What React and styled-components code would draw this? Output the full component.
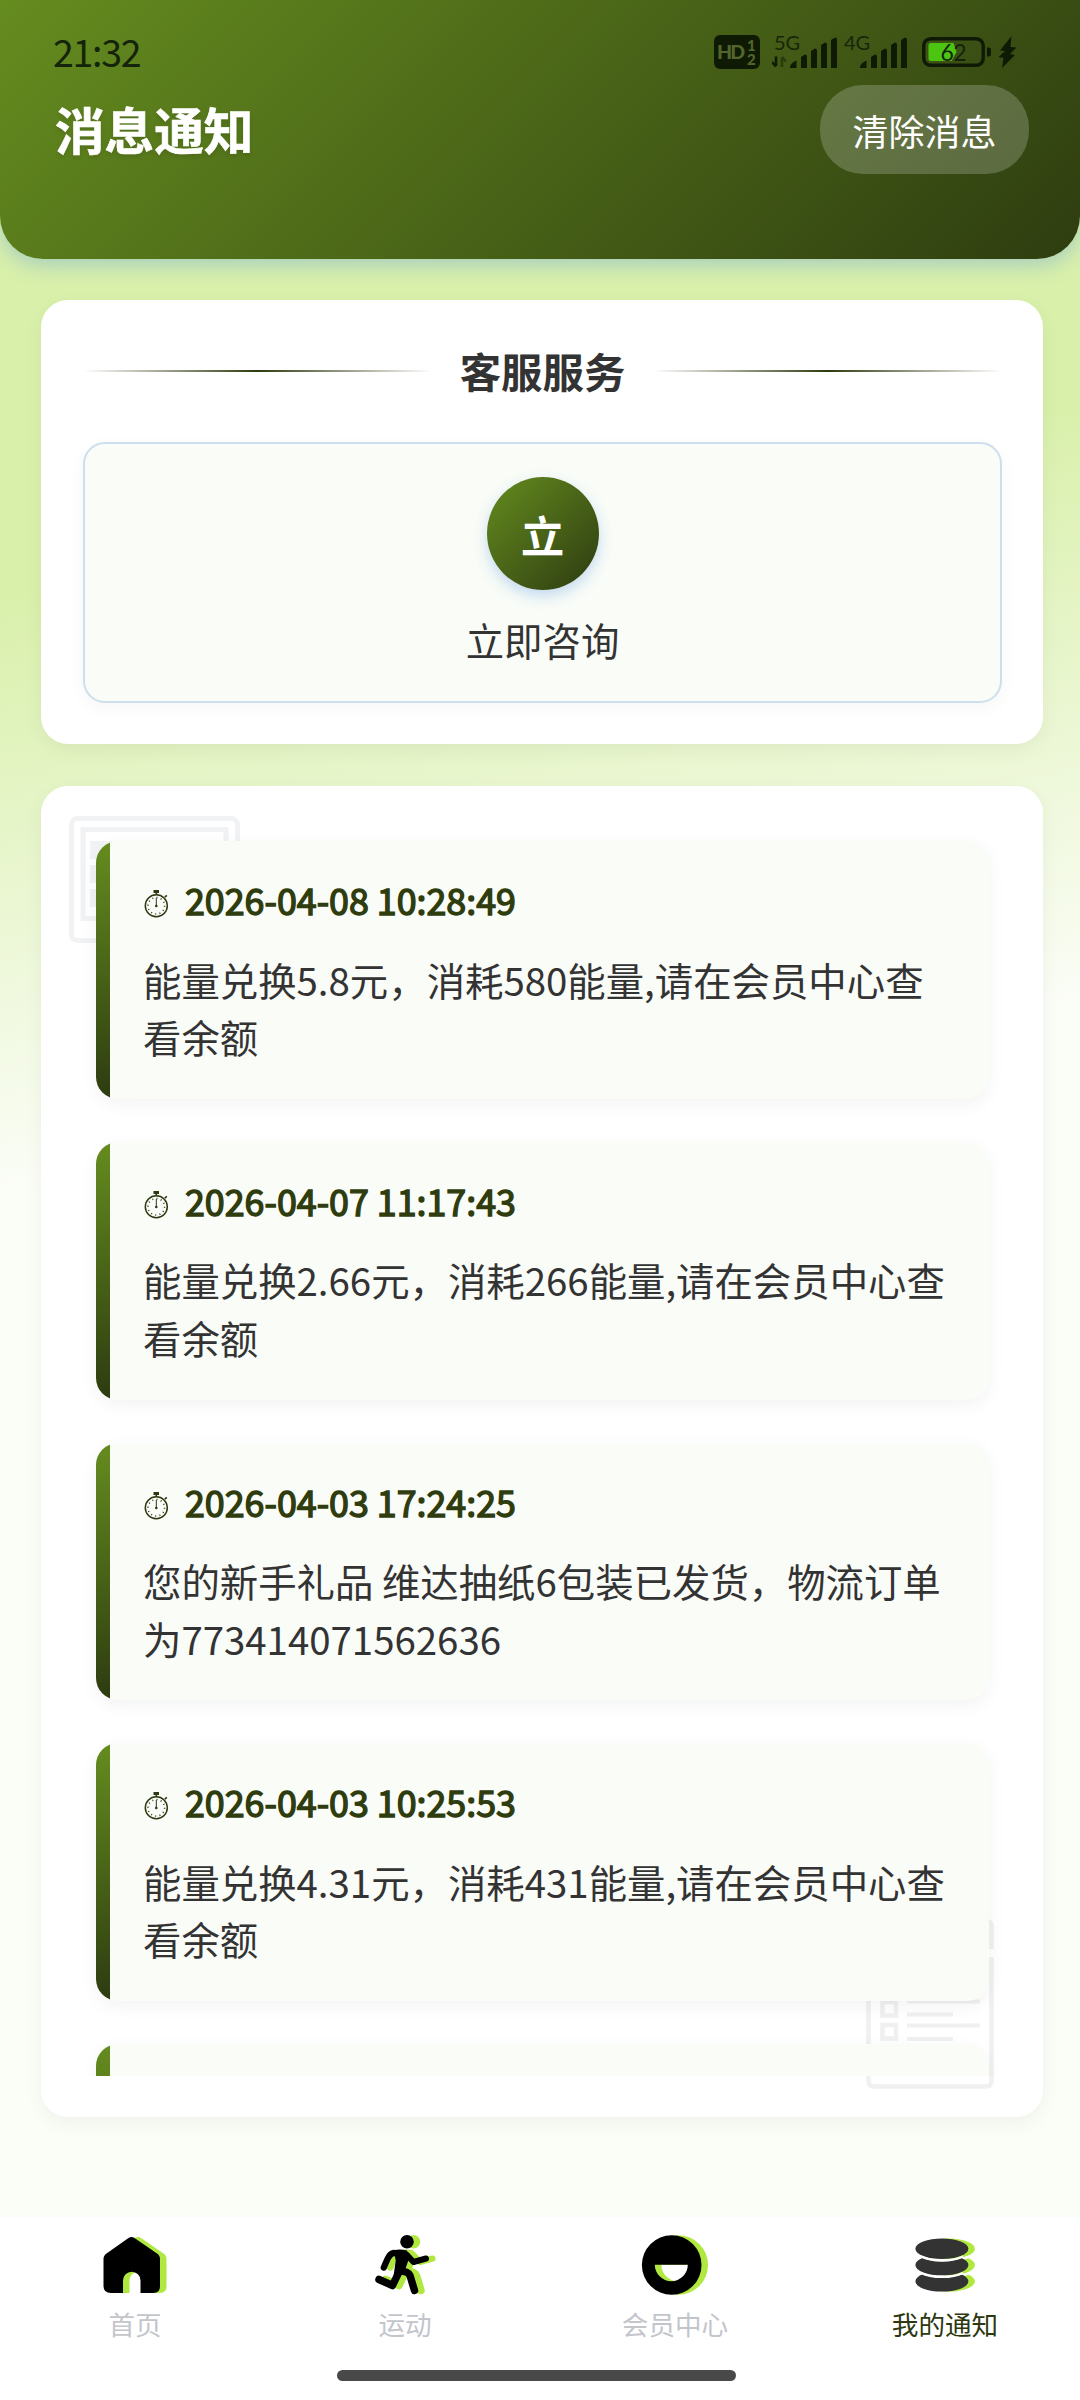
import React from "react";
import styled, { createGlobalStyle, css } from "styled-components";

const messages = [
  {
    id: 1,
    time: "2026-04-08 10:28:49",
    text: "能量兑换5.8元，消耗580能量,请在会员中心查看余额",
  },
  {
    id: 2,
    time: "2026-04-07 11:17:43",
    text: "能量兑换2.66元，消耗266能量,请在会员中心查看余额",
  },
  {
    id: 3,
    time: "2026-04-03 17:24:25",
    text: "您的新手礼品 维达抽纸6包装已发货，物流订单为773414071562636",
  },
  {
    id: 4,
    time: "2026-04-03 10:25:53",
    text: "能量兑换4.31元，消耗431能量,请在会员中心查看余额",
  },
  { id: 5, time: "", text: "" },
];

const StatusIcons = () => (
  <StatusRow>
    <svg width="46" height="34" viewBox="0 0 46 34">
      <rect width="46" height="34" rx="6" fill="#0f1a05" />
      <g fill="#52662c" fontFamily="Lato, sans-serif" fontWeight="900">
        <text x="3" y="24" fontSize="19.5" textLength="28">HD</text>
        <text x="33" y="15.5" fontSize="15">1</text>
        <text x="33" y="29.5" fontSize="15">2</text>
      </g>
    </svg>
    <Signal label="5G" arrows />
    <Signal label="4G" />
    <svg width="70" height="30" viewBox="0 0 70 30">
      <rect x="1.7" y="1.7" width="59.5" height="26.6" rx="7" fill="none" stroke="#0f1a05" strokeWidth="3.4" />
      <path d="M9 6h22.500l3 9-5 9H9a2.500 2.500 0 0 1-2.500-2.500v-13A2.500 2.500 0 0 1 9 6z" fill="#4cc412" />
      <path d="M65 10.500h1.500a2.500 2.500 0 0 1 2.500 2.500v4a2.500 2.500 0 0 1-2.500 2.500H65z" fill="#0f1a05" />
      <text x="18.500" y="23.500" fontSize="23" textLength="26" fill="#14240a" fontFamily="Lato, sans-serif">62</text>
    </svg>
    <svg width="19" height="32" viewBox="0 0 19 32">
      <path d="M13.500 0 2 14.500l5 .5-6.500 6 5 1L4 32 17 19l-5-1 6.500-6.500-6-.5z" fill="#0f1a05" />
    </svg>
  </StatusRow>
);

const Signal = ({ label, arrows }) => (
  <svg width="66" height="50" viewBox="0 -8 66 50">
    <text x="2" y="15" fontSize="20" textLength="26" fill="#17260a" fontFamily="Lato, sans-serif">
      {label}
    </text>
    {arrows && (
      <>
        <path d="M4 21.500v9.500M4 31.500 0 27" stroke="#0f1a05" strokeWidth="2.600" fill="none" />
        <path d="M10 32v-9.500M10 22l4 4.500" stroke="#263c0c" strokeWidth="2.600" fill="none" />
      </>
    )}
    <g fill="#0f1a05">
      <path d="M18 33q0-5 6.500-7.500v7.500z" />
      <path d="M29 22l4-2.500q2 0 2 2V33h-6z" />
      <path d="M39 16l4-2.500q2 0 2 2V33h-6z" />
      <path d="M49 10l4-2.500q2 0 2 2V33h-6z" />
      <path d="M59 5l4-2.500q2 0 2 2V33h-6z" />
    </g>
  </svg>
);

const Stopwatch = () => (
  <svg width="26" height="28" viewBox="0 0 26 28" fill="none" stroke="#2c380f">
    <path d="M9.500 1.500h5.500" strokeWidth="3" />
    <path d="M12.300 2v3M20.800 7.200l2-1.800" strokeWidth="1.600" />
    <circle cx="12.300" cy="15.800" r="11" strokeWidth="1.500" />
    <circle cx="12.300" cy="15.800" r="8.300" strokeWidth="1.500" strokeDasharray="1 3.346" />
    <path d="M12.300 8v8" strokeWidth="1" />
    <circle cx="12.300" cy="16" r="1.300" fill="#2c380f" stroke="none" />
  </svg>
);

// every tab icon is the same shape twice: a lime copy shifted right, then the dark one
const shapes = {
  home: (
    <path
      fillRule="evenodd"
      d="M29.500 9q3-2 6 0L58 24.500q3 2 3 5.500v27.500q0 6.500-6.500 6.500H41.500V51.500a8.500 8.500 0 0 0-17.500 0V64H12q-7.500 0-7.500-7V30q0-3.500 3-5.500z"
    />
  ),
  run: (
    <g fill="none" stroke="currentColor" strokeLinecap="round" strokeLinejoin="round">
      <circle cx="38" cy="12.700" r="6.800" fill="currentColor" stroke="none" />
      <path d="M14.800 38.500 18.500 30Q21 24.500 25 24" strokeWidth="6.300" />
      <path d="M26 22.500q4-1.500 11 0l2 6-4.500 13-8.500 4 2-14z" strokeWidth="2.500" fill="currentColor" />
      <path d="M38 26 44.500 33l12.500-3.500" strokeWidth="6" />
      <path d="M29.500 44 23.500 56.500 10 50.500" strokeWidth="7.500" />
      <path d="M30 42q9 0 11 4.500L45.500 61.500" strokeWidth="7.500" />
    </g>
  ),
  member: (
    <path
      fillRule="evenodd"
      d="M32.700 6.200a29.800 29.800 0 1 1 0 59.600a29.800 29.800 0 1 1 0-59.600zM15.800 35.700a16.500 16.500 0 0 0 33 0z"
    />
  ),
  notice: (
    <>
      <ellipse cx="32.900" cy="19.700" rx="26.500" ry="10.300" />
      <path d="M13.500 29A26.500 10.300 0 0 0 52.300 29A26.500 10.300 0 1 1 13.500 29z" />
      <path d="M13.500 45.300A26.500 10.300 0 0 0 52.300 45.300A26.500 10.300 0 1 1 13.500 45.300z" />
      <path
        d="M12 27.600A26.500 10.300 0 0 0 54 27.600M12 44A26.500 10.300 0 0 0 54 44"
        fill="none"
        stroke="#fff"
        strokeWidth="2.200"
      />
    </>
  ),
};

const TabIcon = ({ name, color }) => (
  <svg width="72" height="72" viewBox="0 0 72 72">
    <g transform="translate(6.500 0)" fill="#b0e83f" color="#b0e83f">
      {shapes[name]}
    </g>
    <g fill={color} color={color}>
      {shapes[name]}
    </g>
  </svg>
);

const tabs = [
  { icon: "home", label: "首页", color: "#000" },
  { icon: "run", label: "运动", color: "#000" },
  { icon: "member", label: "会员中心", color: "#000" },
  { icon: "notice", label: "我的通知", color: "#333", active: true },
];

const App = () => {
  return (
    <>
      <GlobalStyle />
      <Page>
        <Header>
          <StatusBar>
            <Clock>21:32</Clock>
            <StatusIcons />
          </StatusBar>
          <TitleRow>
            <h1>消息通知</h1>
            <ClearButton>清除消息</ClearButton>
          </TitleRow>
        </Header>

        <Content>
          <Card>
            <SectionTitle>
              <Rule />
              <h2>客服服务</h2>
              <Rule />
            </SectionTitle>
            <Consult>
              <Avatar>立</Avatar>
              <p>立即咨询</p>
            </Consult>
          </Card>

          <Card $fill>
            <Deco $corner="top" width="171" height="127" viewBox="0 0 171 127">
              <g fill="none" stroke="#f0f2f4" strokeWidth="5">
                <rect x="2.500" y="2.500" width="166" height="122" rx="6" />
                <rect x="14" y="13.500" width="143" height="89" />
              </g>
              <g fill="#f2f3f4">
                <rect x="21" y="25" width="24" height="18" />
                <rect x="21" y="49" width="24" height="18" />
                <rect x="21" y="73" width="24" height="18" />
              </g>
            </Deco>
            <Deco $corner="bottom" width="128" height="170" viewBox="0 0 128 170">
              <g fill="none" stroke="#f0f0f1" strokeWidth="4.500">
                <path d="M2.500 30V7q0-4.500 5-4.500h113q5 0 5 4.500v23" />
                <path d="M2.500 38v124q0 5.500 5.500 5.500h112q5.500 0 5.500-5.500V38" />
                <rect x="16.500" y="83" width="13.500" height="13.500" />
                <rect x="16.500" y="106" width="13.500" height="13.500" />
                <path d="M41 82.500h73M41 95.500h46M41 106.500h73M41 120h46" strokeWidth="4" />
              </g>
            </Deco>
            <List>
              {messages.map((message) => (
                <Item key={message.id}>
                  <Time>
                    {message.time && <Stopwatch />}
                    <span>{message.time}</span>
                  </Time>
                  <Body>{message.text}</Body>
                </Item>
              ))}
            </List>
          </Card>
        </Content>

        <TabBar>
          {tabs.map((tab) => (
            <Tab key={tab.icon} $active={tab.active}>
              <TabIcon name={tab.icon} color={tab.color} />
              <span>{tab.label}</span>
            </Tab>
          ))}
          <HomeIndicator />
        </TabBar>
      </Page>
    </>
  );
};

const GlobalStyle = createGlobalStyle`
  * {
    box-sizing: border-box;
    margin: 0;
    padding: 0;
  }
  body {
    font-family: "Noto Sans CJK SC", sans-serif;
    color: #333;
  }
`;

const Page = styled.div`
  width: 1080px;
  height: 2400px;
  display: flex;
  flex-direction: column;
  overflow: hidden;
  background: linear-gradient(170deg, #d9f0ab 0%, #d9f0ab 23%, #fbfdf7 46%, #fbfdf7 100%);
`;

const Header = styled.header`
  height: 259px;
  flex: none;
  border-radius: 0 0 43px 43px;
  background: linear-gradient(135deg, #658c1f, #2e3d10);
  box-shadow: 0 6px 20px rgba(74, 144, 226, 0.35);
`;

const StatusBar = styled.div`
  height: 85px;
  padding: 18px 63px 0 53px;
  display: flex;
  align-items: center;
  justify-content: space-between;
`;

const Clock = styled.span`
  margin-top: -2px;
  font-size: 37.5px;
  line-height: 50px;
  letter-spacing: -1.3px;
  color: #14240a;
`;

const StatusRow = styled.div`
  display: flex;
  align-items: center;

  svg:nth-child(2) {
    margin-left: 12px;
  }
  svg:nth-child(3) {
    margin-left: 4px;
  }
  svg:nth-child(4) {
    margin-left: 14px;
  }
  svg:nth-child(5) {
    margin-left: 6px;
  }
`;

const TitleRow = styled.div`
  height: 89px;
  padding: 0 51px 0 55px;
  display: flex;
  align-items: center;
  justify-content: space-between;

  h1 {
    margin-top: -4px;
    font-size: 49.6px;
    line-height: 64px;
    color: #fff;
    -webkit-text-stroke: 0.6px #fff;
    text-shadow: 0 3px 5px rgba(0, 0, 0, 0.12);
  }
`;

const ClearButton = styled.button`
  width: 209px;
  height: 89px;
  padding-top: 1px;
  border: none;
  border-radius: 43px;
  background: rgba(255, 255, 255, 0.2);
  font-family: inherit;
  font-size: 36px;
  line-height: 52px;
  color: #fff;
`;

const Content = styled.main`
  flex: 1;
  min-height: 0;
  padding: 41px 37px 100px 41px;
  display: flex;
  flex-direction: column;
  gap: 42px;
`;

const Card = styled.section`
  position: relative;
  padding: 42px 41px 41px 42px;
  border-radius: 27px;
  background: #fff;
  box-shadow: 0 6px 20px rgba(0, 0, 0, 0.05);

  ${(props) =>
    props.$fill &&
    css`
      flex: 1;
      min-height: 0;
      display: flex;
      flex-direction: column;
    `}
`;

const SectionTitle = styled.div`
  display: flex;
  align-items: center;
  gap: 28px;

  h2 {
    font-size: 41.4px;
    line-height: 56px;
  }
`;

const Rule = styled.div`
  flex: 1;
  height: 2px;
  margin-top: 2px;
  background: linear-gradient(90deg, transparent, #2d3b10, transparent);
`;

const Consult = styled.div`
  height: 261px;
  margin-top: 44px;
  padding-top: 33px;
  display: flex;
  flex-direction: column;
  align-items: center;
  border: 2px solid #cddfed;
  border-radius: 22px;
  background: #f9fcf7;
  box-shadow: 0 5px 18px rgba(0, 0, 0, 0.04);

  p {
    margin-top: 22px;
    font-size: 38.4px;
    line-height: 54px;
  }
`;

const Avatar = styled.div`
  width: 112px;
  height: 113px;
  display: flex;
  align-items: center;
  justify-content: center;
  border-radius: 50%;
  background: linear-gradient(135deg, #658c1f, #2d3b10);
  box-shadow: 0 6px 14px rgba(74, 144, 226, 0.3);
  font-size: 43.2px;
  font-weight: 700;
  color: #fff;
`;

const Deco = styled.svg`
  position: absolute;
  ${(props) =>
    props.$corner === "top"
      ? css`
          top: 30px;
          left: 28px;
        `
      : css`
          right: 49px;
          bottom: 28px;
        `}
`;

const List = styled.div`
  position: relative;
  flex: 1;
  min-height: 0;
  padding: 13px 13px 0;
  display: flex;
  flex-direction: column;
  gap: 43px;
  overflow: hidden;
`;

const Item = styled.article`
  position: relative;
  flex: none;
  height: 257.8px;
  padding: 33px 34px 33px 47px;
  border-radius: 22px;
  overflow: hidden;
  background: #fafcf8;
  box-shadow: 0 5px 18px rgba(0, 0, 0, 0.05);

  &::before {
    content: "";
    position: absolute;
    top: 0;
    bottom: 0;
    left: 0;
    width: 14px;
    background: linear-gradient(180deg, #658c1f, #2d3b10);
  }
`;

const Time = styled.div`
  height: 50px;
  display: flex;
  align-items: center;
  gap: 15px;
  padding-left: 1px;
  font-size: 35.8px;
  line-height: 50px;
  color: #2f3c0e;

  span {
    -webkit-text-stroke: 1.4px #2f3c0e;
  }
  svg {
    margin-top: 10px;
  }
`;

const Body = styled.p`
  margin-top: 26.5px;
  font-size: 38.4px;
  line-height: 57.6px;
`;

const TabBar = styled.nav`
  position: relative;
  flex: none;
  height: 183px;
  padding-top: 12px;
  display: flex;
  background: #fff;
`;

const Tab = styled.div`
  flex: 1;
  display: flex;
  flex-direction: column;
  align-items: center;
  font-size: 26.6px;
  line-height: 40px;
  color: ${(props) => (props.$active ? "#2d3810" : "#c3c5cb")};

  span {
    margin-top: 3px;
  }
`;

const HomeIndicator = styled.div`
  position: absolute;
  bottom: 19px;
  left: 337px;
  width: 399px;
  height: 11px;
  border-radius: 6px;
  background: #494949;
`;

export default App;
